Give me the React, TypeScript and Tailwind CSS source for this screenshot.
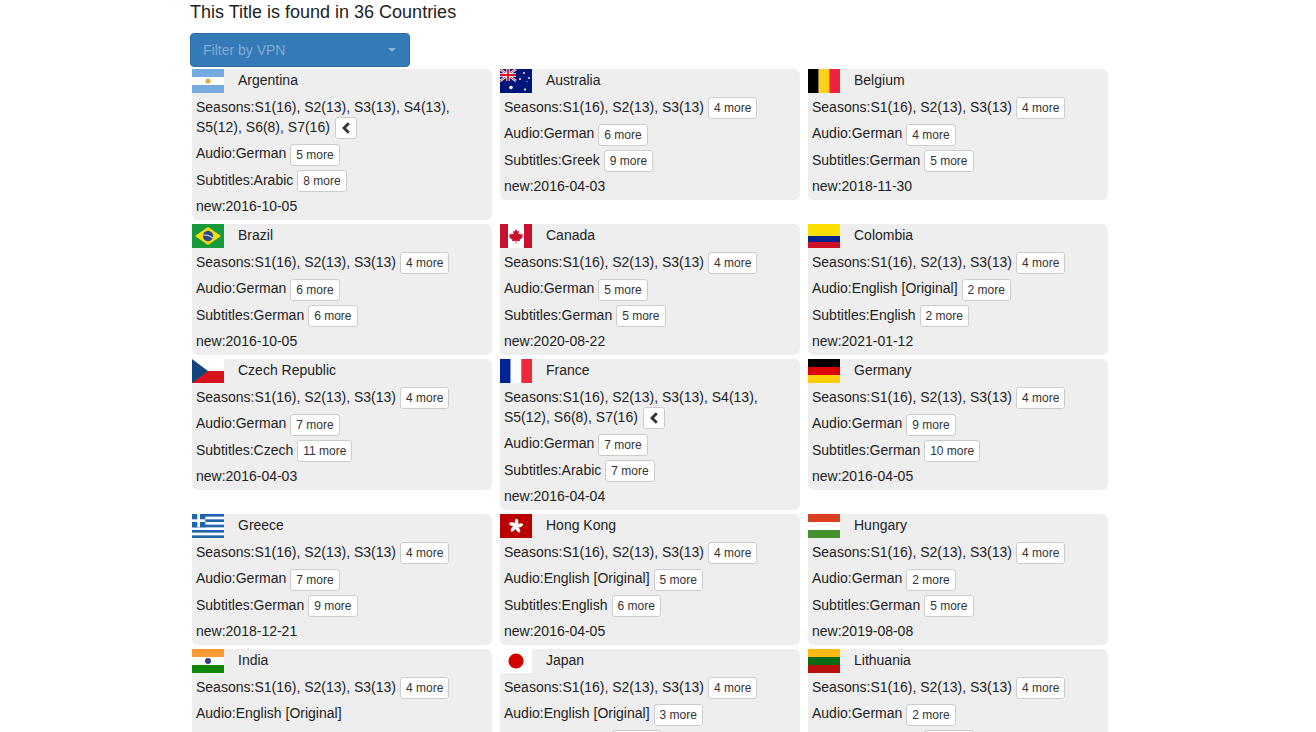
import React from "react";

type Country = {
  name: string;
  flag: string;
  seasons: string;
  expanded?: boolean;
  audio: string;
  audioMore?: number;
  subtitles: string;
  subtitlesMore?: number;
  date: string;
};

const SHORT = "S1(16), S2(13), S3(13)";
const LONG = "S1(16), S2(13), S3(13), S4(13), S5(12), S6(8), S7(16)";

const COUNTRIES: Country[] = [
  { name: "Argentina", flag: "ar", seasons: LONG, expanded: true, audio: "German", audioMore: 5, subtitles: "Arabic", subtitlesMore: 8, date: "2016-10-05" },
  { name: "Australia", flag: "au", seasons: SHORT, audio: "German", audioMore: 6, subtitles: "Greek", subtitlesMore: 9, date: "2016-04-03" },
  { name: "Belgium", flag: "be", seasons: SHORT, audio: "German", audioMore: 4, subtitles: "German", subtitlesMore: 5, date: "2018-11-30" },
  { name: "Brazil", flag: "br", seasons: SHORT, audio: "German", audioMore: 6, subtitles: "German", subtitlesMore: 6, date: "2016-10-05" },
  { name: "Canada", flag: "ca", seasons: SHORT, audio: "German", audioMore: 5, subtitles: "German", subtitlesMore: 5, date: "2020-08-22" },
  { name: "Colombia", flag: "co", seasons: SHORT, audio: "English [Original]", audioMore: 2, subtitles: "English", subtitlesMore: 2, date: "2021-01-12" },
  { name: "Czech Republic", flag: "cz", seasons: SHORT, audio: "German", audioMore: 7, subtitles: "Czech", subtitlesMore: 11, date: "2016-04-03" },
  { name: "France", flag: "fr", seasons: LONG, expanded: true, audio: "German", audioMore: 7, subtitles: "Arabic", subtitlesMore: 7, date: "2016-04-04" },
  { name: "Germany", flag: "de", seasons: SHORT, audio: "German", audioMore: 9, subtitles: "German", subtitlesMore: 10, date: "2016-04-05" },
  { name: "Greece", flag: "gr", seasons: SHORT, audio: "German", audioMore: 7, subtitles: "German", subtitlesMore: 9, date: "2018-12-21" },
  { name: "Hong Kong", flag: "hk", seasons: SHORT, audio: "English [Original]", audioMore: 5, subtitles: "English", subtitlesMore: 6, date: "2016-04-05" },
  { name: "Hungary", flag: "hu", seasons: SHORT, audio: "German", audioMore: 2, subtitles: "German", subtitlesMore: 5, date: "2019-08-08" },
  { name: "India", flag: "in", seasons: SHORT, audio: "English [Original]", subtitles: "English", date: "2016-04-05" },
  { name: "Japan", flag: "jp", seasons: SHORT, audio: "English [Original]", audioMore: 3, subtitles: "English", subtitlesMore: 6, date: "2016-04-05" },
  { name: "Lithuania", flag: "lt", seasons: SHORT, audio: "German", audioMore: 2, subtitles: "German", subtitlesMore: 5, date: "2016-04-05" },
];

const Stripes: React.FC<{ colors: string[]; vertical?: boolean }> = ({ colors, vertical }) => (
  <>
    {colors.map((c, i) =>
      vertical ? (
        <rect key={i} x={(i * 32) / colors.length} y="0" width={32 / colors.length} height="24" fill={c} />
      ) : (
        <rect key={i} x="0" y={(i * 24) / colors.length} width="32" height={24 / colors.length} fill={c} />
      )
    )}
  </>
);

const FlagArt: React.FC<{ code: string }> = ({ code }) => {
  switch (code) {
    case "ar":
      return (
        <>
          <Stripes colors={["#74acdf", "#ffffff", "#74acdf"]} />
          <circle cx="16" cy="12" r="2.6" fill="#e0b040" />
        </>
      );
    case "au":
      return (
        <>
          <rect width="32" height="24" fill="#00157a" />
          <path d="M0 0L16 12M16 0L0 12" stroke="#fff" strokeWidth="2.4" />
          <path d="M0 0L16 12M16 0L0 12" stroke="#d8142c" strokeWidth="0.9" />
          <path d="M8 0V12M0 6H16" stroke="#fff" strokeWidth="3.4" />
          <path d="M8 0V12M0 6H16" stroke="#d8142c" strokeWidth="1.8" />
          <circle cx="11" cy="18.5" r="1.8" fill="#fff" />
          <circle cx="24" cy="4" r="0.9" fill="#fff" />
          <circle cx="29" cy="9" r="0.9" fill="#fff" />
          <circle cx="20" cy="10" r="0.9" fill="#fff" />
          <circle cx="25" cy="20.5" r="1.1" fill="#fff" />
          <circle cx="27" cy="12.5" r="0.5" fill="#fff" />
        </>
      );
    case "be":
      return <Stripes vertical colors={["#000000", "#fdd216", "#ef233c"]} />;
    case "br":
      return (
        <>
          <rect width="32" height="24" fill="#169b3c" />
          <path d="M16 3L29 12L16 21L3 12Z" fill="#fcdc04" />
          <circle cx="16" cy="12" r="5.2" fill="#2b4a8e" />
          <path d="M11 11Q16 10 21 14" stroke="#e8e8e8" strokeWidth="1" fill="none" />
        </>
      );
    case "ca":
      return (
        <>
          <rect width="32" height="24" fill="#ffffff" />
          <rect width="8" height="24" fill="#c8102e" />
          <rect x="24" width="8" height="24" fill="#c8102e" />
          <path d="M16 5L17.4 7.6L19 6.8L18.4 10.4L20.2 9.2L20.8 10.6L23 10.2L22.2 12.6L23 13.2L19.6 15.8L20 17.2L16.4 16.8V19.4H15.6V16.8L12 17.2L12.4 15.8L9 13.2L9.8 12.6L9 10.2L11.2 10.6L11.8 9.2L13.6 10.4L13 6.8L14.6 7.6Z" fill="#c8102e" />
        </>
      );
    case "co":
      return (
        <>
          <rect width="32" height="12" fill="#fcdf00" />
          <rect y="12" width="32" height="6" fill="#00248f" />
          <rect y="18" width="32" height="6" fill="#ce1126" />
        </>
      );
    case "cz":
      return (
        <>
          <rect width="32" height="12" fill="#ffffff" />
          <rect y="12" width="32" height="12" fill="#d7141a" />
          <path d="M0 0L16 12L0 24Z" fill="#11457e" />
        </>
      );
    case "fr":
      return <Stripes vertical colors={["#002395", "#ffffff", "#ed2939"]} />;
    case "de":
      return <Stripes colors={["#000000", "#dd0000", "#ffce00"]} />;
    case "gr":
      return (
        <>
          <rect width="32" height="24" fill="#ffffff" />
          {[0, 2, 4, 6, 8].map((i) => (
            <rect key={i} y={(i * 24) / 9} width="32" height={24 / 9} fill="#1f66ad" />
          ))}
          <rect width="13.3" height="13.3" fill="#1f66ad" />
          <rect x="5.3" width="2.7" height="13.3" fill="#ffffff" />
          <rect y="5.3" width="13.3" height="2.7" fill="#ffffff" />
        </>
      );
    case "hk":
      return (
        <>
          <rect width="32" height="24" fill="#ba0000" />
          {[0, 72, 144, 216, 288].map((a) => (
            <ellipse key={a} cx="16.6" cy="8.4" rx="1.8" ry="3.6" fill="#ffffff" transform={`rotate(${a} 16 12)`} />
          ))}
        </>
      );
    case "hu":
      return <Stripes colors={["#d8401f", "#ffffff", "#44902c"]} />;
    case "in":
      return (
        <>
          <Stripes colors={["#ff9933", "#ffffff", "#128807"]} />
          <circle cx="16" cy="12" r="3" fill="#333b8f" />
        </>
      );
    case "jp":
      return (
        <>
          <rect width="32" height="24" fill="#ffffff" />
          <circle cx="16" cy="12" r="7.6" fill="#d30000" />
        </>
      );
    case "lt":
      return <Stripes colors={["#fdb913", "#0a6a14", "#b80f0f"]} />;
    default:
      return null;
  }
};

const Flag: React.FC<{ code: string }> = ({ code }) => (
  <svg viewBox="0 0 32 24" className="w-8 h-6 shrink-0 block">
    <FlagArt code={code} />
  </svg>
);

const XsButton: React.FC<{ children: React.ReactNode }> = ({ children }) => (
  <button className="inline-block align-middle ml-1 h-[22px] px-[5px] bg-white border border-[#ccc] rounded-[3px] text-xs leading-[18px] text-[#333]">
    {children}
  </button>
);

const CountryCard: React.FC<{ c: Country }> = ({ c }) => (
  <div className="bg-[#eee] rounded-md">
    <div className="flex items-start h-6">
      <Flag code={c.flag} />
      <span className="ml-3.5 pt-px leading-5">{c.name}</span>
    </div>
    <div className="px-1 pt-1 pb-1">
      <div className="leading-5 mb-1">
        Seasons:{c.seasons}
        {c.expanded ? (
          <span className="ml-px">
            <XsButton>
              <svg viewBox="0 0 10 12" className="w-2.5 h-3 block">
                <path d="M7.8 1.2L3 6L7.8 10.8" fill="none" stroke="#333" strokeWidth="2.8" />
              </svg>
            </XsButton>
          </span>
        ) : (
          <XsButton>4 more</XsButton>
        )}
      </div>
      <div className="leading-5 mb-1 min-h-[22px]">
        Audio:{c.audio}
        {c.audioMore && <XsButton>{c.audioMore} more</XsButton>}
      </div>
      <div className="leading-5 mb-1 min-h-[22px]">
        Subtitles:{c.subtitles}
        {c.subtitlesMore && <XsButton>{c.subtitlesMore} more</XsButton>}
      </div>
      <div className="leading-5">new:{c.date}</div>
    </div>
  </div>
);

export default function App() {
  return (
    <div className="h-screen overflow-hidden bg-white text-sm text-[#222] font-['Liberation_Sans',Arial,sans-serif]">
      <div className="mx-auto w-[936px]">
        <h3 className="text-lg leading-5 pt-0.5 mb-[11px]">This Title is found in 36 Countries</h3>
        <button className="flex items-center justify-between w-[220px] h-[34px] pl-3 pr-[13px] mb-0.5 bg-[#337ab7] border border-[#2e6da4] rounded text-sm text-[#83abd2]">
          <span>Filter by VPN</span>
          <span className="w-0 h-0 border-x-4 border-x-transparent border-t-4 border-t-[#8db3d6]" />
        </button>
        <div className="ml-0.5 grid grid-cols-[300px_300px_300px] items-start gap-x-2 gap-y-[4.1px]">
          {COUNTRIES.map((c) => (
            <CountryCard key={c.name} c={c} />
          ))}
        </div>
      </div>
    </div>
  );
}
